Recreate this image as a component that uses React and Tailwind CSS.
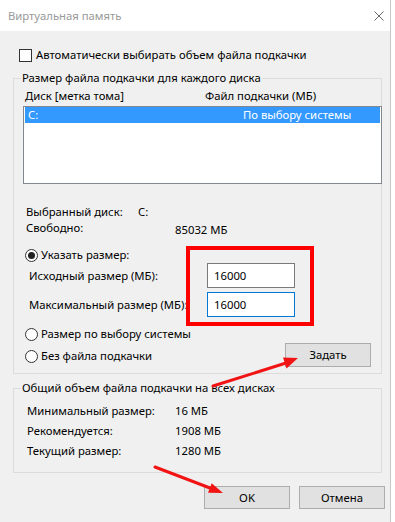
import React from "react";

function Radio({ checked, label }) {
  return (
    <div className="flex items-center gap-[3px] ml-px h-[16px]">
      <span className="w-[13px] h-[13px] rounded-full border border-[#333] bg-white flex items-center justify-center shrink-0">
        {checked && <span className="w-[7px] h-[7px] rounded-full bg-[#222]" />}
      </span>
      <span className="whitespace-nowrap">{label}</span>
    </div>
  );
}

function SizeField({ label, value, focused }) {
  return (
    <div className="flex items-center">
      <span className="w-[183px] pl-[5px]">
        {/* label control is narrower than the column, long text gets cut */}
        <span className="block max-w-[158px] overflow-hidden whitespace-nowrap">{label}</span>
      </span>
      <div
        className={`w-[88px] h-[25px] bg-white border flex items-center pl-[6px] ${
          focused ? "border-[#0078d7]" : "border-[#7a7a7a]"
        }`}
      >
        {value}
      </div>
    </div>
  );
}

export default function App() {
  const totals = [
    { label: "Минимальный размер:", value: "16 МБ" },
    { label: "Рекомендуется:", value: "1908 МБ" },
    { label: "Текущий размер:", value: "1280 МБ" },
  ];

  return (
    <div className="w-[395px] h-[522px] bg-white relative overflow-hidden font-['Noto_Sans',sans-serif] text-[11.3px] leading-[16px] text-black">
      <div className="w-[391px] h-full bg-[#f0f0f0] border-r border-[#c8c8c8] flex flex-col">
        {/* title bar */}
        <div className="h-[31px] bg-white flex items-center justify-between pl-[8px] pr-[6px] shrink-0">
          <span className="text-[#999]">Виртуальная память</span>
          <svg width="10" height="10" viewBox="0 0 10 10">
            <path d="M0.5 0.5 L9.5 9.5 M9.5 0.5 L0.5 9.5" stroke="#666" strokeWidth="1" fill="none" />
          </svg>
        </div>

        {/* auto checkbox */}
        <div className="mt-[16px] pl-[19px] flex items-center gap-[4px] h-[16px]">
          <span className="w-[13px] h-[13px] border border-[#333] bg-white shrink-0" />
          <span>Автоматически выбирать объем файла подкачки</span>
        </div>

        {/* per-disk group */}
        <fieldset className="mt-[7px] ml-[13px] w-[369px] min-w-0 h-[304px] border border-[#dcdcdc] p-0">
          <legend className="ml-[7px] px-px">Размер файла подкачки для каждого диска</legend>
          <div className="px-[10px] pt-[2px]">
            <div className="grid grid-cols-[180px_1fr] ml-px">
              <span>Диск [метка тома]</span>
              <span>Файл подкачки (МБ)</span>
            </div>

            <div className="mt-[2px] -ml-px w-[359px] h-[78px] bg-white border border-[#828790] px-px">
              <div className="h-[16px] bg-[#3399ff] text-white grid grid-cols-[215px_1fr] pl-[3px]">
                <span>C:</span>
                <span>По выбору системы</span>
              </div>
            </div>

            <div className="mt-[20px] ml-[2px] grid grid-cols-[112px_1fr]">
              <span>Выбранный диск:</span>
              <span>C:</span>
            </div>
            <div className="ml-[2px] grid grid-cols-[149px_1fr] items-start">
              <span>Свободно:</span>
              <span className="mt-[2px]">85032 МБ</span>
            </div>

            <div className="mt-[9px]">
              <Radio checked label="Указать размер:" />
            </div>
            <SizeField label="Исходный размер (МБ):" value="16000" />
            <div className="mt-[4px]">
              <SizeField label="Максимальный размер (МБ):" value="16000" focused />
            </div>

            <div className="mt-[9px] flex justify-between">
              <div className="flex flex-col gap-[6px]">
                <Radio label="Размер по выбору системы" />
                <Radio label="Без файла подкачки" />
              </div>
              <button className="mt-[17px] w-[86px] h-[24px] bg-[#e1e1e1] border border-[#adadad]">
                Задать
              </button>
            </div>
          </div>
        </fieldset>

        {/* totals group */}
        <fieldset className="mt-[6px] ml-[13px] w-[369px] min-w-0 h-[93px] border border-[#dcdcdc] p-0">
          <legend className="ml-[7px] px-px">Общий объем файла подкачки на всех дисках</legend>
          <div className="pl-[13px] mt-[5px]">
            {totals.map((t) => (
              <div key={t.label} className="grid grid-cols-[148px_1fr] leading-[20px]">
                <span>{t.label}</span>
                <span>{t.value}</span>
              </div>
            ))}
          </div>
        </fieldset>

        {/* dialog buttons */}
        <div className="mt-[13px] flex justify-end gap-[9px] pr-[5px]">
          <button className="w-[86px] h-[23px] bg-[#e1e1e1] border border-[#adadad]">OK</button>
          <button className="w-[86px] h-[23px] bg-[#e1e1e1] border border-[#adadad]">Отмена</button>
        </div>
      </div>

      {/* annotation overlay */}
      <div className="absolute left-[186px] top-[246px] w-[128px] h-[80px] border-4 border-[#ff0000] pointer-events-none" />
      <svg className="absolute inset-0 pointer-events-none" width="395" height="522" viewBox="0 0 395 522">
        <g stroke="#f21414" strokeWidth="3" strokeLinecap="round" fill="#f21414">
          <line x1="213" y1="386" x2="286" y2="363" />
          <line x1="155" y1="467" x2="210" y2="488" />
        </g>
        <g fill="#f21414">
          <polygon points="298,358 286.5,368.5 283,357.5" />
          <polygon points="223,493 208,492.7 211.7,483.3" />
        </g>
      </svg>
    </div>
  );
}
